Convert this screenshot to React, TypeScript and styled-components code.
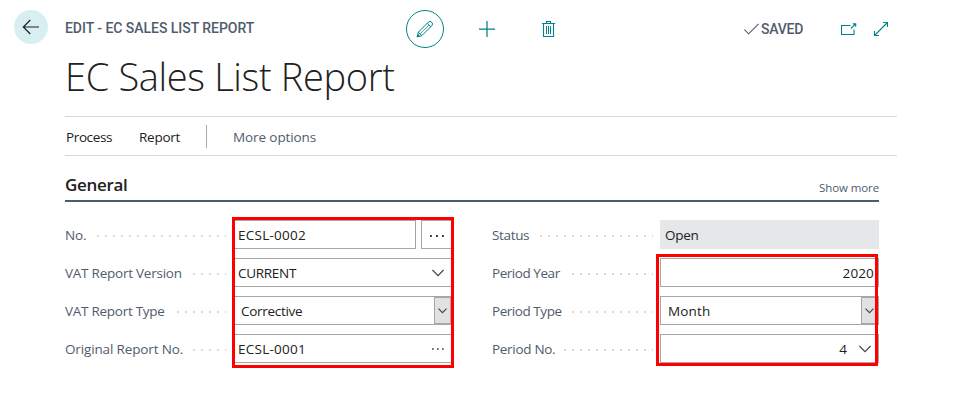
import React from "react";
import styled, { createGlobalStyle } from "styled-components";

const teal = "#00838a";
const slate = "#505c6d";

const GlobalStyle = createGlobalStyle`
  * { box-sizing: border-box; }
  body { margin: 0; background: #fff; color: #212121; font: 13.5px/1 "Open Sans", "Noto Sans", sans-serif; }
  svg { display: block; fill: none; flex: none; }
`;

const Page = styled.main`
  width: 963px;
  height: 410px;
  padding: 10px 66px 0 14px;
  display: grid;
  grid-template-columns: 51px 832px;
  align-content: start;
  overflow: hidden;
`;

const BackButton = styled.button`
  width: 34px;
  height: 34px;
  padding: 0;
  border: 0;
  border-radius: 50%;
  background: #d8eff1;
  display: grid;
  place-items: center;
`;

const Content = styled.div`
  grid-column: 2;
`;

const TopBar = styled.header`
  height: 38px;
  display: grid;
  grid-template-columns: 341px 338px 1fr;
  align-items: start;
`;

const Caption = styled.span<{ $ls: number }>`
  font: 500 14px/37px Roboto, sans-serif;
  letter-spacing: ${(p) => p.$ls}px;
  color: ${slate};
  white-space: nowrap;
`;

const Actions = styled.div`
  display: flex;
  align-items: center;
`;

const EditButton = styled.button`
  width: 38px;
  height: 38px;
  margin-right: 35px;
  padding: 0;
  border: 1px solid ${teal};
  border-radius: 50%;
  background: #fff;
  display: grid;
  place-items: center;
`;

const IconButton = styled.button<{ $gap?: number }>`
  padding: 0;
  border: 0;
  margin-left: ${(p) => p.$gap ?? 0}px;
  background: none;
`;

const StatusBar = styled.div`
  height: 38px;
  display: flex;
  align-items: center;
`;

const SavedState = styled.span`
  width: 96px;
  display: flex;
  align-items: center;
  gap: 2px;
`;

const Title = styled.h1`
  margin: 0;
  height: 68px;
  font-weight: 300;
  font-size: 38px;
  line-height: 57px;
  letter-spacing: -0.35px;
`;

const Menu = styled.nav`
  height: 40px;
  border: solid #d4d6db;
  border-width: 1px 0;
  display: flex;
  align-items: center;
`;

const MenuItem = styled.a<{ $w: number; $ls: number; $muted?: boolean }>`
  width: ${(p) => p.$w}px;
  padding: 2px 0 0 1px;
  letter-spacing: ${(p) => p.$ls}px;
  line-height: 38px;
  color: ${(p) => (p.$muted ? slate : "#212121")};
`;

const Divider = styled.span`
  width: 1px;
  height: 23px;
  margin-right: 25px;
  background: #a3a9b5;
`;

const SectionHead = styled.div`
  width: 814px;
  height: 46px;
  border-bottom: 2px solid ${slate};
  display: flex;
  justify-content: space-between;
  align-items: flex-end;
`;

const SectionTitle = styled.h2`
  margin: 0;
  font-size: 17px;
  font-weight: 600;
  line-height: 30px;
  letter-spacing: -0.3px;
`;

const ShowMore = styled.a`
  font-size: 11.5px;
  line-height: 24px;
  letter-spacing: -0.1px;
  color: ${slate};
`;

const Form = styled.div`
  width: 814px;
  margin-top: 18px;
  display: flex;
  justify-content: space-between;
`;

const Group = styled.section`
  position: relative;
  width: 387px;
  display: flex;
  flex-direction: column;
  gap: 9px;
`;

const Row = styled.div`
  height: 29px;
  display: flex;
  align-items: stretch;
`;

const LabelCell = styled.label`
  width: 168px;
  padding-right: 7px;
  flex: none;
  display: flex;
  align-items: center;
`;

const LabelText = styled.span<{ $ls: number }>`
  flex: none;
  letter-spacing: ${(p) => p.$ls}px;
  line-height: 28px;
  padding-top: 1px;
  color: ${slate};
`;

const Dots = styled.span<{ $w: number }>`
  width: ${(p) => p.$w}px;
  height: 2px;
  margin: 3px 0 0 auto;
  background: repeating-linear-gradient(to right, #d8dade 0 2px, transparent 2px 8px);
`;

const Field = styled.div<{ $w?: number; $kind?: "select" | "readonly"; $right?: boolean }>`
  width: ${(p) => p.$w ?? 219}px;
  flex: none;
  border: ${(p) => (p.$kind === "readonly" ? "0" : "1px solid #a6a6a6")};
  background: ${(p) => (p.$kind === "readonly" ? "#e5e7e9" : "#fff")};
  padding-left: ${(p) => (p.$kind === "select" ? 7 : p.$kind === "readonly" ? 5 : 4)}px;
  display: flex;
  align-items: center;
  justify-content: ${(p) => (p.$right ? "flex-end" : "space-between")};
`;

const Value = styled.span<{ $ls?: number; $end?: number }>`
  letter-spacing: ${(p) => p.$ls ?? 0}px;
  line-height: 26px;
  padding-top: 1px;
  margin-right: ${(p) => p.$end ?? 0}px;
`;

const SelectArrow = styled.span`
  width: 17px;
  height: 27px;
  border: 1px solid #a6a6a6;
  background: #e1e1e1;
  display: grid;
  place-items: center;
`;

const Trailing = styled.span`
  margin-right: 7px;
`;

const LookupButton = styled.button`
  width: 31px;
  flex: none;
  margin-left: 5px;
  padding: 2px 0 0;
  border: 1px solid #a6a6a6;
  background: #fff;
  display: grid;
  place-items: center;
`;

const Highlight = styled.div<{ $top: number; $left: number; $h: number }>`
  position: absolute;
  top: ${(p) => p.$top}px;
  left: ${(p) => p.$left}px;
  width: 222px;
  height: ${(p) => p.$h}px;
  border: 3px solid #fe0000;
  pointer-events: none;
`;

const Chevron = ({ small }: { small?: boolean }) =>
  small ? (
    <svg width="9" height="6" viewBox="0 0 9 6" stroke="#404040" strokeWidth="1.1">
      <path d="M.5 .7 4.5 4.7 8.5 .7" />
    </svg>
  ) : (
    <svg width="12" height="8" viewBox="0 0 12 8" stroke="#404040" strokeWidth="1.1">
      <path d="M.4 1 6 6.6 11.6 1" />
    </svg>
  );

const Ellipsis = ({ wide }: { wide?: boolean }) => (
  <svg width={wide ? 14 : 12} height="2" viewBox={wide ? "0 0 14 2" : "0 0 12 2"}>
    <path
      fill={wide ? "#303030" : "#404040"}
      d={
        wide
          ? "M0 .1h1.8v1.8h-1.8zM6 .1h1.8v1.8h-1.8zM12 .1h1.8v1.8h-1.8z"
          : "M0 .2h1.7v1.6h-1.7zM5 .2h1.7v1.6h-1.7zM10 .2h1.7v1.6h-1.7z"
      }
    />
  </svg>
);

const Label = ({ text, ls, dots }: { text: string; ls: number; dots: number }) => (
  <LabelCell>
    <LabelText $ls={ls}>{text}</LabelText>
    <Dots $w={dots} />
  </LabelCell>
);

export default function App() {
  return (
    <>
      <GlobalStyle />
      <Page>
        <BackButton aria-label="Back">
          <svg width="18" height="16" viewBox="0 0 18 16" stroke="#212121" strokeWidth="1.2">
            <path d="M17 8H1.5M8.3 1 1.3 8l7 7" />
          </svg>
        </BackButton>
        <Content>
          <TopBar>
            <Caption $ls={-0.04}>EDIT - EC SALES LIST REPORT</Caption>
            <Actions>
              <EditButton aria-label="Edit">
                <svg width="18" height="18" viewBox="0 0 18 18" stroke={teal}>
                  <path d="M1.2 16.8 2.3 12.2 12.3 2.2Q14 .6 15.7 2.2T15.8 5.7L5.8 15.7zM2.3 12.2l3.5 3.5M11.2 3.3l3.5 3.5" />
                  <path d="M4.2 13.8 13 5" strokeWidth=".7" />
                  <path d="M1.2 16.8l.6-2.3 1.7 1.7z" fill={teal} />
                </svg>
              </EditButton>
              <IconButton aria-label="New">
                <svg width="16" height="16" viewBox="0 0 16 16" stroke={teal} strokeWidth="1.25">
                  <path d="M0 8h16M8 0v16" />
                </svg>
              </IconButton>
              <IconButton aria-label="Delete" $gap={47}>
                <svg width="14" height="16" viewBox="0 0 14 16" stroke={teal}>
                  <path d="M0 2.5h13.2M4.5 2.5v-2h4v2M1.5 2.5v13h10v-13" strokeWidth="1.1" />
                  <path d="M4.5 5v8M6.5 5v8M8.5 5v8" />
                </svg>
              </IconButton>
            </Actions>
            <StatusBar>
              <SavedState>
                <svg width="15" height="12" viewBox="0 0 15 12" stroke={slate} strokeWidth="1.1">
                  <path d="M.4 6.6 4.6 10.8 14.6 .8" />
                </svg>
                <Caption $ls={-0.25}>SAVED</Caption>
              </SavedState>
              <IconButton aria-label="Open in new window">
                <svg width="17" height="13" viewBox="0 0 17 13" stroke={teal} strokeWidth="1.1">
                  <path d="M10.5 2.5h-9v9h12.5V6.5M11 5.5 15.6 .9M12.8 .9h2.9v2.9" />
                </svg>
              </IconButton>
              <IconButton aria-label="Expand" $gap={16}>
                <svg width="16" height="16" viewBox="0 0 16 16" stroke={teal} strokeWidth="1.1">
                  <path d="M1.5 14.5 14.5 1.5M10 1.5h4.5V6M1.5 10v4.5h4.5" />
                </svg>
              </IconButton>
            </StatusBar>
          </TopBar>
          <Title>EC Sales List Report</Title>
          <Menu>
            <MenuItem $w={73} $ls={-0.38}>Process</MenuItem>
            <MenuItem $w={68} $ls={-0.25}>Report</MenuItem>
            <Divider />
            <MenuItem $w={90} $ls={-0.1} $muted>More options</MenuItem>
          </Menu>
          <SectionHead>
            <SectionTitle>General</SectionTitle>
            <ShowMore>Show more</ShowMore>
          </SectionHead>
          <Form>
            <Group>
              <Row>
                <Label text="No." ls={-0.2} dots={129} />
                <Field $w={183}><Value $ls={0.24}>ECSL-0002</Value></Field>
                <LookupButton aria-label="Lookup"><Ellipsis wide /></LookupButton>
              </Row>
              <Row>
                <Label text="VAT Report Version" ls={-0.24} dots={33} />
                <Field>
                  <Value $ls={-0.3}>CURRENT</Value>
                  <Trailing><Chevron /></Trailing>
                </Field>
              </Row>
              <Row>
                <Label text="VAT Report Type" ls={-0.27} dots={49} />
                <Field $kind="select">
                  <Value $ls={-0.3}>Corrective</Value>
                  <SelectArrow><Chevron small /></SelectArrow>
                </Field>
              </Row>
              <Row>
                <Label text="Original Report No." ls={-0.14} dots={33} />
                <Field>
                  <Value $ls={0.24}>ECSL-0001</Value>
                  <Trailing><Ellipsis /></Trailing>
                </Field>
              </Row>
              <Highlight $top={-3} $left={167} $h={151} />
            </Group>
            <Group>
              <Row>
                <Label text="Status" ls={-0.35} dots={113} />
                <Field $kind="readonly"><Value $ls={-0.25}>Open</Value></Field>
              </Row>
              <Row>
                <Label text="Period Year" ls={-0.45} dots={81} />
                <Field $right><Value $ls={0.15} $end={4}>2020</Value></Field>
              </Row>
              <Row>
                <Label text="Period Type" ls={-0.45} dots={81} />
                <Field $kind="select">
                  <Value $ls={0.15}>Month</Value>
                  <SelectArrow><Chevron small /></SelectArrow>
                </Field>
              </Row>
              <Row>
                <Label text="Period No." ls={-0.3} dots={89} />
                <Field $right>
                  <Value $end={12}>4</Value>
                  <Trailing><Chevron /></Trailing>
                </Field>
              </Row>
              <Highlight $top={34} $left={164} $h={112} />
            </Group>
          </Form>
        </Content>
      </Page>
    </>
  );
}
